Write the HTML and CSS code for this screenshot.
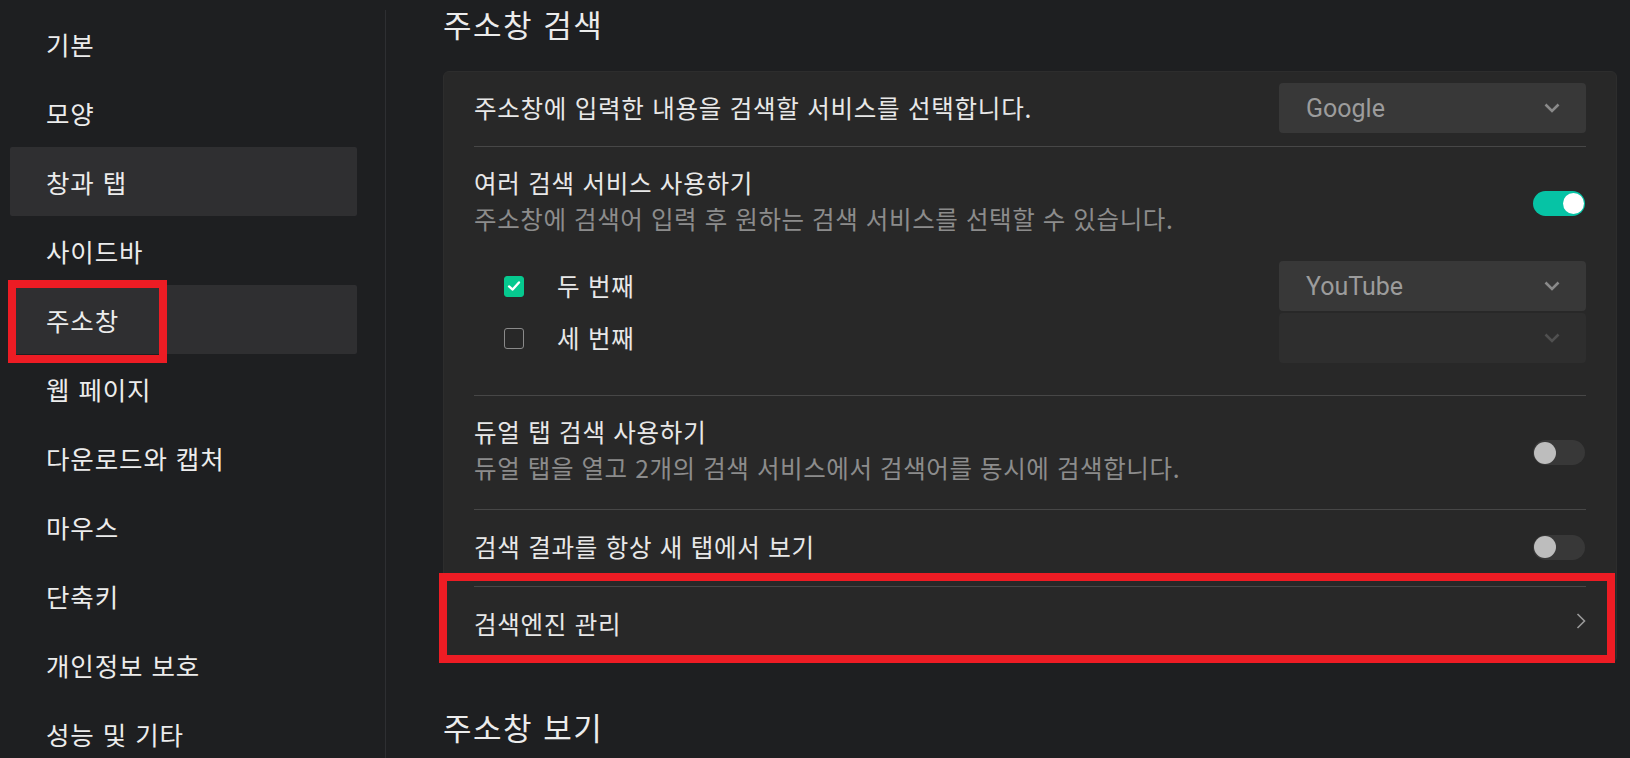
FILE: index.html
```html
<!DOCTYPE html>
<html lang="ko">
<head>
<meta charset="utf-8">
<title>설정 - 주소창</title>
<link rel="stylesheet" href="styles.css">
</head>
<body>
<div class="app">
  <nav class="sidebar">
    <ul class="nav">
      <li class="nav-item">기본</li>
      <li class="nav-item">모양</li>
      <li class="nav-item hover">창과 탭</li>
      <li class="nav-item">사이드바</li>
      <li class="nav-item active mark-nav">주소창</li>
      <li class="nav-item">웹 페이지</li>
      <li class="nav-item">다운로드와 캡처</li>
      <li class="nav-item">마우스</li>
      <li class="nav-item">단축키</li>
      <li class="nav-item">개인정보 보호</li>
      <li class="nav-item">성능 및 기타</li>
    </ul>
  </nav>
  <main class="content">
    <h2 class="section-title">주소창 검색</h2>
    <section class="card">
      <div class="row row-first">
        <div class="row-text">
          <div class="label">주소창에 입력한 내용을 검색할 서비스를 선택합니다.</div>
        </div>
        <div class="select">
          <span class="select-value">Google</span>
          <svg class="chev" viewBox="0 0 16 10" width="16" height="10"><polyline points="1.5,1.5 8,8 14.5,1.5" fill="none" stroke="currentColor" stroke-width="2.6"/></svg>
        </div>
      </div>

      <div class="row row-multi">
        <div class="row-head">
          <div class="row-text">
            <div class="label">여러 검색 서비스 사용하기</div>
            <div class="desc">주소창에 검색어 입력 후 원하는 검색 서비스를 선택할 수 있습니다.</div>
          </div>
          <span class="toggle on"><span class="knob"></span></span>
        </div>
        <div class="options">
          <div class="option">
            <label class="check-label"><span class="check checked"><svg viewBox="0 0 20 20" width="20" height="20"><polyline points="4.5,10.5 8.5,14 15.5,6" fill="none" stroke="#fff" stroke-width="2.6" stroke-linecap="round" stroke-linejoin="round"/></svg></span><span class="opt-text">두 번째</span></label>
            <div class="select">
              <span class="select-value">YouTube</span>
              <svg class="chev" viewBox="0 0 16 10" width="16" height="10"><polyline points="1.5,1.5 8,8 14.5,1.5" fill="none" stroke="currentColor" stroke-width="2.6"/></svg>
            </div>
          </div>
          <div class="option">
            <label class="check-label"><span class="check"></span><span class="opt-text">세 번째</span></label>
            <div class="select disabled">
              <span class="select-value"></span>
              <svg class="chev" viewBox="0 0 16 10" width="16" height="10"><polyline points="1.5,1.5 8,8 14.5,1.5" fill="none" stroke="currentColor" stroke-width="2.6"/></svg>
            </div>
          </div>
        </div>
      </div>

      <div class="row row-dual">
        <div class="row-text">
          <div class="label">듀얼 탭 검색 사용하기</div>
          <div class="desc">듀얼 탭을 열고 2개의 검색 서비스에서 검색어를 동시에 검색합니다.</div>
        </div>
        <span class="toggle"><span class="knob"></span></span>
      </div>

      <div class="row row-simple">
        <div class="row-text">
          <div class="label">검색 결과를 항상 새 탭에서 보기</div>
        </div>
        <span class="toggle"><span class="knob"></span></span>
      </div>

      <div class="row row-link mark-row">
        <div class="row-text">
          <div class="label">검색엔진 관리</div>
        </div>
        <svg class="arrow" viewBox="0 0 10 16" width="10" height="16"><polyline points="1.5,1 8.5,8 1.5,15" fill="none" stroke="currentColor" stroke-width="1.6"/></svg>
      </div>
    </section>
    <h2 class="section-title second">주소창 보기</h2>
  </main>
</div>
</body>
</html>
```
FILE: styles.css
```css
*, *::before, *::after { box-sizing: border-box; }
html, body {
  margin: 0;
  padding: 0;
  background: #1e1f21;
  height: 100%;
  overflow: hidden;
}
body {
  font-family: "Noto Sans CJK KR", "Noto Sans", sans-serif;
  color: #e8e8e8;
}
.app {
  display: flex;
  height: 758px;
}
.sidebar {
  width: 386px;
  flex: none;
  padding: 9px 0 0 10px;
  position: relative;
}
.sidebar::after {
  content: "";
  position: absolute;
  right: 0;
  top: 10px;
  bottom: 0;
  width: 1px;
  background: #2e2f32;
}
.nav {
  list-style: none;
  margin: 0;
  padding: 0;
  width: 347px;
}
.nav-item {
  height: 69px;
  display: flex;
  align-items: center;
  padding-left: 36px;
  font-size: 25.5px;
  letter-spacing: 0.9px;
  color: #ececec;
  border-radius: 2px;
  position: relative;
}
.nav-item.hover,
.nav-item.active {
  background: #2f2f31;
}
.mark-nav::after {
  content: "";
  position: absolute;
  left: -2px;
  top: -5px;
  width: 159px;
  height: 83px;
  border: 8px solid #ed1c24;
}
.content {
  flex: 1;
  padding: 4px 13px 0 57px;
}
.section-title {
  margin: 0;
  font-weight: 400;
  font-size: 31px;
  letter-spacing: 1.5px;
  line-height: 40px;
  color: #ececec;
}
.section-title.second {
  margin-top: 44px;
}
.card {
  margin-top: 27px;
  background: #282828;
  border: 1px solid #2d2d2d;
  border-radius: 6px;
  padding: 0 30px;
}
.row {
  display: flex;
  align-items: center;
  justify-content: space-between;
  border-top: 1px solid #474747;
  position: relative;
}
.row-first {
  border-top: 0;
  padding: 11px 0 13px;
}
.row-multi {
  display: block;
  padding: 18px 0 32px;
}
.row-head {
  display: flex;
  align-items: center;
  justify-content: space-between;
}
.row-head .toggle { margin-top: 5px; }
.row-dual {
  padding: 18px 0 23px;
}
.row-dual .toggle { margin-top: 5px; }
.row-simple {
  padding: 19px 0 21px;
}
.row-link {
  padding: 19px 0 20px;
}
.mark-row::after {
  content: "";
  position: absolute;
  left: -35px;
  right: -29px;
  top: -14px;
  bottom: -1px;
  border: 8px solid #ed1c24;
}
.label {
  font-size: 24.5px;
  letter-spacing: 0.75px;
  line-height: 36px;
  color: #e8e8e8;
}
.desc {
  font-size: 24.5px;
  letter-spacing: 0.6px;
  line-height: 36px;
  color: #8c8c8c;
}
.select {
  width: 307px;
  height: 50px;
  background: #383838;
  border-radius: 4px;
  display: flex;
  align-items: center;
  justify-content: space-between;
  padding: 0 26px 0 27px;
  color: #9a9a9a;
  flex: none;
}
.select-value {
  font-family: Roboto, "Noto Sans", sans-serif;
  font-size: 25px;
  color: #9c9c9c;
}
.select .chev { color: #8a8a8a; }
.select.disabled { background: #2e2e2e; }
.select.disabled .chev { color: #505050; }
.toggle {
  width: 52px;
  height: 25px;
  border-radius: 13px;
  background: #383838;
  position: relative;
  flex: none;
  margin-right: 1px;
}
.toggle .knob {
  position: absolute;
  left: 1px;
  top: 1.5px;
  width: 22px;
  height: 22px;
  border-radius: 50%;
  background: #bdbdbd;
}
.toggle.on { background: #06c3a5; }
.toggle.on .knob {
  left: auto;
  right: 1px;
  width: 21px;
  height: 21px;
  top: 2px;
  background: #ffffff;
}
.options {
  margin-top: 24px;
  display: flex;
  flex-direction: column;
  gap: 2px;
}
.option {
  display: flex;
  align-items: center;
  justify-content: space-between;
}
.check-label {
  display: flex;
  align-items: center;
  padding-left: 30px;
}
.check {
  width: 20px;
  height: 21px;
  border-radius: 3px;
  border: 1.5px solid #8a8a8a;
  display: flex;
  align-items: center;
  justify-content: center;
  flex: none;
}
.check.checked {
  background: #06c98f;
  border-color: #06c98f;
}
.check svg { display: block; }
.opt-text {
  margin-left: 33px;
  font-size: 24.5px;
  letter-spacing: 0.75px;
  line-height: 36px;
  color: #e8e8e8;
}
.arrow {
  color: #9a9a9a;
  margin-top: -6px;
}
```
